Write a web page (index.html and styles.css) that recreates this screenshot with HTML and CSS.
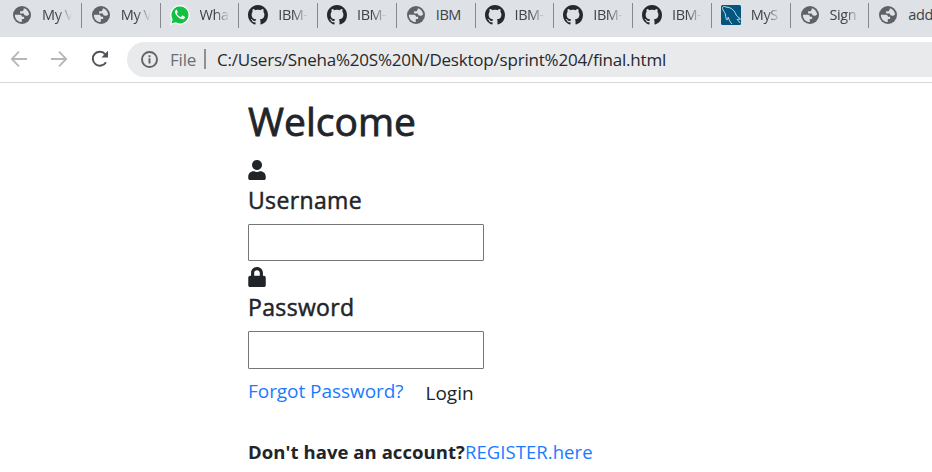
FILE: index.html
```html
<!DOCTYPE html>
<html lang="en">
<head>
<meta charset="utf-8">
<title>Login</title>
<link rel="stylesheet" href="styles.css">
</head>
<body>
<svg class="defs" aria-hidden="true">
  <symbol id="globe" viewBox="0 0 18 18"><circle cx="9" cy="9" r="9" fill="#5f6368"/><path d="M1.900 8.700h4.300c1.800 0 2.600.6 2.800 2h2.100v2.200H8.800v3.100C4.800 16 1.700 12.800 1.900 8.700zM10.800 2.200c2.800.7 5 3 5.300 6.200-.8.900-1.600 1.300-2.700 1.300-1.500 0-2.400-.7-2.600-2.200H7.100V5.300h1.700c1.200 0 1.900-.9 2-3.100z" fill="#dee1e6"/></symbol>
  <symbol id="github" viewBox="0 0 16 16"><path fill="#24292f" d="M8 0C3.580 0 0 3.580 0 8c0 3.540 2.290 6.530 5.470 7.590.4.070.55-.17.55-.38 0-.19-.01-.82-.01-1.490-2.010.37-2.530-.49-2.690-.94-.09-.23-.48-.94-.82-1.130-.28-.15-.68-.52-.01-.53.63-.01 1.080.58 1.230.82.72 1.210 1.870.87 2.330.66.070-.52.28-.87.51-1.070-1.780-.2-3.640-.89-3.640-3.950 0-.87.31-1.590.82-2.150-.08-.2-.36-1.020.08-2.120 0 0 .67-.21 2.200.82.64-.18 1.320-.27 2-.27s1.360.09 2 .27c1.530-1.040 2.200-.82 2.200-.82.44 1.100.16 1.920.08 2.120.51.56.82 1.270.82 2.150 0 3.070-1.870 3.750-3.650 3.950.29.25.54.73.54 1.480 0 1.070-.01 1.930-.01 2.200 0 .21.15.46.55.38A8.010 8.010 0 0 0 16 8c0-4.420-3.580-8-8-8z"/></symbol>
  <symbol id="whatsapp" viewBox="0 0 20 20"><path fill="#fff" d="M0 20l1.500-5.200A9.800 9.800 0 1 1 5.500 18.600z"/><path fill="#12c143" d="M1.500 18.500l1.200-4.200A8.500 8.500 0 1 1 5.800 17.300z"/><path fill="#fff" d="M7 5.200c-.3-.5-.9-.4-1.300 0-1 1-.9 2.500.1 4 1.500 2.400 3.400 4.100 5.900 4.900 1.500.5 3-.3 3.200-1.700.1-.5 0-.7-.4-.9l-1.900-.9c-.3-.1-.5 0-.7.2l-.8 1c-.2.200-.4.200-.7.100-1.400-.6-2.600-1.600-3.400-3-.2-.3 0-.5.200-.7.500-.5.700-.8.500-1.200z"/></symbol>
  <symbol id="mysql" viewBox="0 0 20 20"><rect width="20" height="20" rx="1.500" fill="#04567f"/><path d="M1.500 3.500C1 1.500 3 1 5 2c4 0 7.500 2.500 9 5.500 1 2 1.500 3.500 2.800 4.300l2.700 2.200-3.300.4 3 3.600M1.500 3.500c.3 1.600 2 3.500 2.800 5.300.6 1.700.2 3.600 1 5.300.5 1.300 1.100 1 1.400-.2l.5-1.700c.8 2.200 1.600 4.800 3.800 6.800" fill="none" stroke="#c7dbe5" stroke-width="1"/></symbol>
</svg>

<nav class="tabs">
  <div class="tab"><svg class="globe"><use href="#globe"/></svg><span>My V</span></div>
  <div class="tab"><svg class="globe"><use href="#globe"/></svg><span>My V</span></div>
  <div class="tab"><svg class="logo"><use href="#whatsapp"/></svg><span>Wha</span></div>
  <div class="tab"><svg class="logo"><use href="#github"/></svg><span>IBM-</span></div>
  <div class="tab"><svg class="logo"><use href="#github"/></svg><span>IBM-</span></div>
  <div class="tab"><svg class="globe"><use href="#globe"/></svg><span class="whole">IBM</span></div>
  <div class="tab"><svg class="logo"><use href="#github"/></svg><span>IBM-</span></div>
  <div class="tab"><svg class="logo"><use href="#github"/></svg><span>IBM-</span></div>
  <div class="tab"><svg class="logo"><use href="#github"/></svg><span>IBM-</span></div>
  <div class="tab"><svg class="logo"><use href="#mysql"/></svg><span>MyS</span></div>
  <div class="tab"><svg class="globe"><use href="#globe"/></svg><span>Sign</span></div>
  <div class="tab"><svg class="globe"><use href="#globe"/></svg><span class="whole">add</span></div>
</nav>

<header class="toolbar">
  <svg class="arrow" viewBox="0 0 16 16"><path d="M16 8H1M8 .7L.8 8 8 15.300"/></svg>
  <svg class="arrow" viewBox="0 0 16 16"><path d="M0 8h15M8 .7L15.200 8 8 15.300"/></svg>
  <svg class="reload" viewBox="0 0 18 18"><path d="M14.900 12.200A7 7 0 1 1 14.300 4.300" fill="none" stroke="#505459" stroke-width="2"/><path d="M17 .8v6.600h-6.600z" fill="#505459"/></svg>
  <div class="address">
    <svg class="info" viewBox="0 0 17 17"><circle cx="8.500" cy="8.500" r="7.500"/><path d="M8.500 7.300v5.200M8.500 4.300v1.900"/></svg>
    <span class="scheme">File</span>
    <span class="divider"></span>
    <span class="url">C:/Users/Sneha%20S%20N/Desktop/sprint%204/final.html</span>
  </div>
</header>

<main class="page">
  <h1>Welcome</h1>
  <svg class="fa" viewBox="0 0 448 512"><path d="M224 256c70.700 0 128-57.300 128-128S294.700 0 224 0 96 57.300 96 128s57.300 128 128 128zm89.600 32h-16.700c-22.200 10.200-46.900 16-72.900 16s-50.600-5.800-72.900-16h-16.700C60.200 288 0 348.200 0 422.400V464c0 26.500 21.500 48 48 48h352c26.500 0 48-21.500 48-48v-41.600c0-74.200-60.200-134.400-134.400-134.400z"/></svg>
  <label class="user" for="user">Username</label>
  <input id="user" type="text">
  <svg class="fa lock" viewBox="0 0 448 512"><path d="M400 224h-24v-72C376 68.200 307.800 0 224 0S72 68.200 72 152v72H48c-26.500 0-48 21.500-48 48v192c0 26.500 21.500 48 48 48h352c26.500 0 48-21.500 48-48V272c0-26.500-21.500-48-48-48zm-104 0H152v-72c0-39.700 32.300-72 72-72s72 32.300 72 72v72z"/></svg>
  <label class="pass" for="pass">Password</label>
  <input id="pass" class="second" type="password">
  <div class="actions"><a class="forgot">Forgot Password?</a><span class="login">Login</span></div>
  <p class="signup"><b>Don't have an account?</b><a>REGISTER.here</a></p>
</main>
</body>
</html>
```

FILE: styles.css
```css
* { box-sizing: border-box; }
body {
  margin: 0;
  height: 472px;
  overflow: hidden;
  background: #fff;
  color: #212529;
  font-family: "Open Sans", "Noto Sans", sans-serif;
}
svg { display: block; flex: none; }
.defs { position: absolute; width: 0; height: 0; }

.tabs {
  display: flex;
  height: 37px;
  padding: 3px 0 0 3px;
  background: #dee1e6;
}
.tab {
  flex: none;
  display: flex;
  align-items: center;
  width: 78.750px;
  height: 25px;
  padding: 0 0 1px 9px;
  border-right: 1px solid #85888d;
}
.tab svg { width: 20px; height: 20px; margin-right: 10px; }
.tab .globe { width: 18px; height: 18px; margin: 0 11px 0 1px; }
.tab span {
  width: 30px;
  overflow: hidden;
  white-space: nowrap;
  font-size: 14.500px;
  line-height: 22px;
  letter-spacing: -0.400px;
  color: #3f4247;
  -webkit-mask-image: linear-gradient(90deg, #000 50%, transparent);
  mask-image: linear-gradient(90deg, #000 50%, transparent);
}
.tab .whole { -webkit-mask-image: none; mask-image: none; }

.toolbar {
  display: flex;
  align-items: center;
  height: 46px;
  padding: 0 0 1px 11px;
  border-bottom: 1px solid #d5d6d8;
}
.arrow {
  width: 16px;
  height: 16px;
  margin-right: 24px;
  fill: none;
  stroke: #b5b6b8;
  stroke-width: 1.800;
}
.reload { width: 18px; height: 18px; margin-right: 18px; }
.address {
  flex: 1;
  display: flex;
  align-items: center;
  height: 35px;
  padding-left: 14px;
  border-radius: 18px 0 0 18px;
  background: #e9eaec;
  font-size: 17px;
  line-height: 24px;
  white-space: nowrap;
}
.info { width: 17px; height: 17px; margin-right: 12px; fill: none; stroke: #5f6368; stroke-width: 1.900; }
.scheme { width: 34px; padding-top: 1px; color: #6a6e73; letter-spacing: -0.200px; }
.divider { width: 2px; height: 20px; margin-right: 11px; background: #8d9094; }
.url { padding-top: 1px; color: #26282b; letter-spacing: -0.210px; }

.page {
  display: flex;
  flex-direction: column;
  align-items: flex-start;
  padding: 14px 0 0 248px;
}
h1 {
  margin: 0 0 15px;
  font-size: 39px;
  font-weight: 400;
  line-height: 48px;
  -webkit-text-stroke: 0.800px #212529;
}
.fa { width: 18px; height: 20px; fill: #212529; }
label {
  font-size: 23px;
  line-height: 30px;
  letter-spacing: 0.350px;
  -webkit-text-stroke: 0.500px #212529;
}
.user { margin: 5px 0 9px; }
.pass { margin: 5px 0 9px; }
input {
  width: 236px;
  height: 37px;
  margin: 0;
  padding: 0;
  border: 1px solid #767676;
  border-radius: 1px;
  background: #fff;
}
.second { height: 38px; }
.lock { margin-top: 6px; }
.actions {
  display: flex;
  margin-top: 8px;
  font-size: 19px;
  line-height: 28px;
  white-space: nowrap;
}
a { color: #1a7bff; }
.forgot { width: 177.500px; letter-spacing: -0.050px; }
.login { padding-top: 2px; }
.signup {
  margin: 31px 0 0;
  font-size: 18.500px;
  line-height: 28px;
  letter-spacing: 0.060px;
  white-space: nowrap;
}
```
